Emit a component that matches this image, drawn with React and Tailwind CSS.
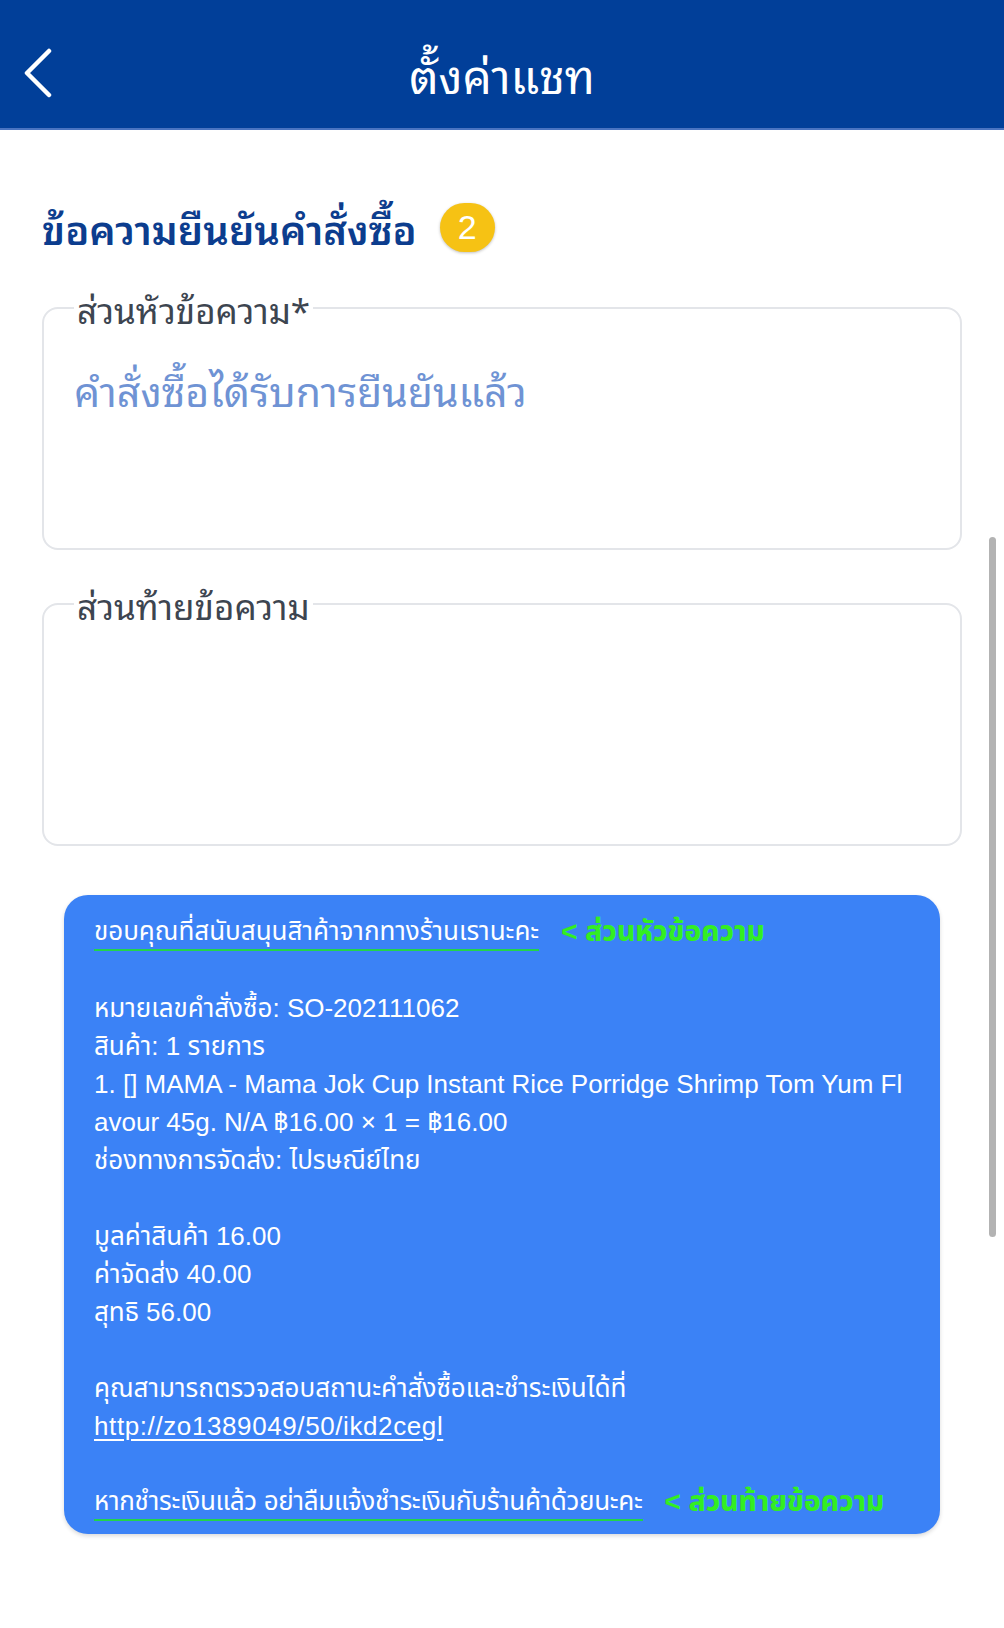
import React from 'react';

const thai = { fontFamily: '"Noto Sans Thai Looped", "Noto Sans Thai", "Noto Sans", sans-serif' };
const cardFont = { fontFamily: '"Liberation Sans", "Noto Sans Thai", sans-serif' };

const Field = ({ label, value, className = '' }) => (
  <fieldset className={`h-[264px] border-2 border-[#e3e5e9] rounded-[16px] px-[30px] ${className}`}>
    <legend className="px-[3px] text-[35px] leading-[44px] text-[#3d4550]">{label}</legend>
    {value && (
      <div className="mt-[34px] text-[41px] leading-[50px] text-[#6f93d4]">{value}</div>
    )}
  </fieldset>
);

const lines = [
  'หมายเลขคำสั่งซื้อ: SO-202111062',
  'สินค้า: 1 รายการ',
  '1. [] MAMA - Mama Jok Cup Instant Rice Porridge Shrimp Tom Yum Fl',
  'avour 45g. N/A ฿16.00 × 1 = ฿16.00',
  'ช่องทางการจัดส่ง: ไปรษณีย์ไทย',
  '',
  'มูลค่าสินค้า 16.00',
  'ค่าจัดส่ง 40.00',
  'สุทธิ 56.00',
  '',
  'คุณสามารถตรวจสอบสถานะคำสั่งซื้อและชำระเงินได้ที่',
];

export default function App() {
  return (
    <div className="min-h-screen bg-white relative" style={thai}>
      <header className="h-[130px] bg-[#013f99] border-b-2 border-[#4a74c2] grid grid-cols-[90px_1fr_90px] items-center pt-[18px]">
        <button className="pl-[22px] text-white">
          <svg width="32" height="50" viewBox="0 0 32 50" fill="none">
            <path d="M27 3 L5 25 L27 47" stroke="white" strokeWidth="4.5" strokeLinecap="round" strokeLinejoin="round" />
          </svg>
        </button>
        <h1 className="text-center text-white text-[46px] leading-[56px] font-normal">ตั้งค่าแชท</h1>
        <div />
      </header>

      <main className="pl-[42px] pr-[42px]">
        <div className="flex items-center gap-[23px] mt-[71px]">
          <h2 className="text-[40px] leading-[52px] font-semibold text-[#0c3d8e]">ข้อความยืนยันคำสั่งซื้อ</h2>
          <span className="w-[55px] h-[49px] rounded-full bg-[#f6c214] shadow-[0_1px_3px_rgba(0,0,0,0.25)] flex items-center justify-center text-white text-[34px] leading-none" style={{ fontFamily: '"Liberation Sans", sans-serif' }}>2</span>
        </div>

        <div className="mt-[33px] flex flex-col gap-[32px]">
          <Field label="ส่วนหัวข้อความ*" value="คำสั่งซื้อได้รับการยืนยันแล้ว" />
          <Field label="ส่วนท้ายข้อความ" />
        </div>

        <div className="mt-[49px] ml-[22px] mr-[22px] rounded-[24px] bg-[#3b82f6] shadow-[0_2px_4px_rgba(0,0,0,0.15)] pt-[18px] pb-[13px] pl-[30px] pr-[20px] text-white text-[26px] leading-[38px] whitespace-nowrap" style={cardFont}>
          <div className="flex items-center">
            <span className="border-b-2 border-[#22d44a] leading-[36px]">ขอบคุณที่สนับสนุนสิาค้าจากทางร้านเรานะคะ</span>
            <span className="ml-[22px] text-[#33ee22] text-[28px] font-extrabold">&lt; ส่วนหัวข้อความ</span>
          </div>
          <div className="h-[38px]" />
          {lines.map((l, i) => (
            <div key={i} className="h-[38px]">{l}</div>
          ))}
          <div className="h-[38px] underline underline-offset-4 tracking-[0.6px]">http://zo1389049/50/ikd2cegl</div>
          <div className="h-[38px]" />
          <div className="flex items-center">
            <span className="border-b-2 border-[#22d44a] leading-[36px] tracking-[-0.3px]">หากชำระเงินแล้ว อย่าลืมแจ้งชำระเงินกับร้านค้าด้วยนะคะ</span>
            <span className="ml-[22px] text-[#33ee22] text-[28px] font-extrabold">&lt; ส่วนท้ายข้อความ</span>
          </div>
        </div>
      </main>

      <div className="absolute right-[8px] top-[537px] w-[7px] h-[700px] rounded-full bg-[#b3b3b3]" />
    </div>
  );
}
